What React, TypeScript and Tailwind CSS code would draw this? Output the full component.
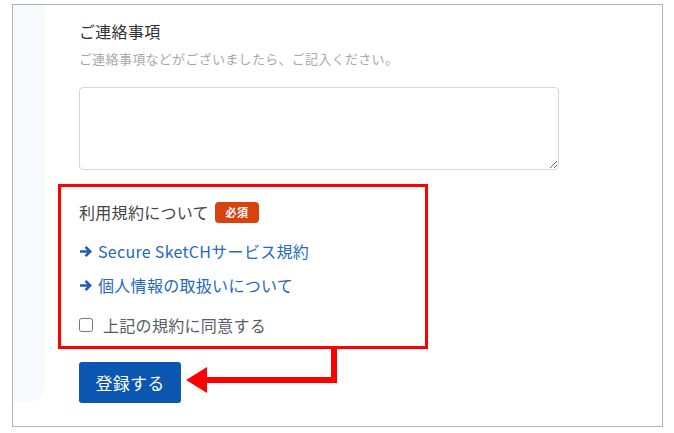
import React from "react";

const font = { fontFamily: '"Noto Sans CJK JP", "Noto Sans", sans-serif' };

function LinkArrow() {
  return (
    <svg width="13" height="13" viewBox="0 0 13 13" className="shrink-0">
      <path d="M1 6.5H11M6.5 1.8L11.2 6.5L6.5 11.2" fill="none" stroke="#1f5fae" strokeWidth="2.6" strokeLinecap="butt" strokeLinejoin="miter" />
    </svg>
  );
}

export default function App() {
  return (
    <div className="relative h-[433px] w-[674px] overflow-hidden bg-white pl-[12px] pt-[4px] tracking-[0.3px]" style={font}>
      <div className="flex h-[423px] w-[651px] border border-[#b3b3b3] bg-white">
        <div className="h-[397px] w-[32px] shrink-0 rounded-br-[18px] bg-[#f7f9fc]" />
        <div className="flex flex-col pl-[34px] pt-[14px]">
          <h2 className="text-[16px] leading-[24px] text-[#333]">ご連絡事項</h2>
          <p className="mt-[6px] text-[13px] leading-[20px] text-[#a8a8a8]">ご連絡事項などがございましたら、ご記入ください。</p>
          <textarea className="mt-[18px] h-[83px] w-[480px] rounded-[4px] border border-[#d3d8de] bg-white" />

          <div className="-ml-[21px] mt-[14px] h-[165px] w-[370px] border-[3px] border-[#ff0000] pl-[18px] pt-[13px]">
            <div className="flex items-center gap-[6px]">
              <span className="text-[16px] leading-[24px] text-[#444]">利用規約について</span>
              <span className="flex h-[21px] w-[44px] items-center justify-center rounded-[4px] bg-[#d8420e] text-[11px] font-bold text-white">必須</span>
            </div>
            <a className="mt-[15px] flex items-center gap-[6px] text-[16px] leading-[24px] text-[#2569bd]">
              <LinkArrow />
              <span>Secure SketCHサービス規約</span>
            </a>
            <a className="mt-[10px] flex items-center gap-[6px] text-[16px] leading-[24px] text-[#2569bd]">
              <LinkArrow />
              <span>個人情報の取扱いについて</span>
            </a>
            <label className="mt-[16px] flex items-center gap-[10px] text-[16px] leading-[24px] text-[#555c66]">
              <input type="checkbox" className="m-0 h-[14px] w-[14px]" />
              <span>上記の規約に同意する</span>
            </label>
          </div>

          <button className="mt-[13px] h-[41px] w-[102px] rounded-[3px] bg-[#0a56b0] text-[17px] text-white">登録する</button>
        </div>
      </div>

      <svg className="pointer-events-none absolute left-0 top-0" width="674" height="433">
        <polyline points="334,348 334,380 204,380" fill="none" stroke="#ff0000" strokeWidth="6" strokeLinejoin="miter" />
        <polygon points="186,380 207,367 207,393" fill="#ff0000" />
      </svg>
    </div>
  );
}
